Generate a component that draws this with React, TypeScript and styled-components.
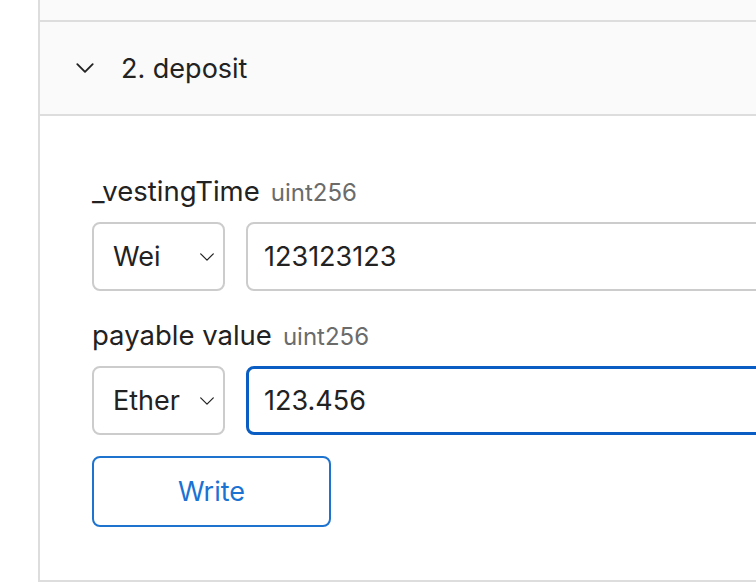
import React from 'react'
import styled, { createGlobalStyle } from 'styled-components'

const GlobalStyle = createGlobalStyle`
  html, body {
    margin: 0;
    padding: 0;
    background: #ffffff;
    overflow: hidden;
  }
  body {
    font-family: Inter, "Noto Sans", "Liberation Sans", sans-serif;
    color: #222222;
  }
`

const Chevron = ({ size = 20, sw = 1.6 }: { size?: number; sw?: number }) => (
  <svg width={size} height={size} viewBox="0 0 20 20" fill="none">
    <path d="M3 6.5 L10 13.5 L17 6.5" stroke="#222" strokeWidth={sw} strokeLinecap="round" strokeLinejoin="round" />
  </svg>
)

const App = () => {
  return (
    <>
      <GlobalStyle />
      <Page>
        <Panel>
          <PrevHeader />
          <Header>
            <ChevronBox>
              <Chevron size={22} sw={1.7} />
            </ChevronBox>
            <Title>2. deposit</Title>
          </Header>
          <Body>
            <Field>
              <Label>
                _vestingTime<Type>uint256</Type>
              </Label>
              <Row>
                <Select>
                  <span>Wei</span>
                  <SelectArrow>
                    <Chevron size={18} sw={1.4} />
                  </SelectArrow>
                </Select>
                <Input defaultValue="123123123" />
              </Row>
            </Field>
            <Field>
              <Label>
                payable value<Type>uint256</Type>
              </Label>
              <Row>
                <Select>
                  <span>Ether</span>
                  <SelectArrow>
                    <Chevron size={18} sw={1.4} />
                  </SelectArrow>
                </Select>
                <Input defaultValue="123.456" focused />
              </Row>
            </Field>
            <WriteButton>Write</WriteButton>
          </Body>
        </Panel>
      </Page>
    </>
  )
}

export default App

const Page = styled.div`
  width: 756px;
  height: 584px;
  overflow: hidden;
  padding-left: 38px;
  box-sizing: border-box;
`
const Panel = styled.div`
  width: 1000px;
  border-left: 2px solid #dddddd;
  display: flex;
  flex-direction: column;
`
const PrevHeader = styled.div`
  height: 20px;
  background: #fafafa;
  border-bottom: 2px solid #dddddd;
`
const Header = styled.div`
  height: 92px;
  background: #fafafa;
  border-bottom: 2px solid #dddddd;
  display: flex;
  align-items: center;
  padding-left: 34px;
`
const ChevronBox = styled.div`
  display: flex;
  align-items: center;
  width: 22px;
  margin-right: 25px;
`
const Title = styled.div`
  font-size: 27px;
  color: #222222;
`
const Body = styled.div`
  padding: 61px 0 53px 52px;
  border-bottom: 2px solid #dddddd;
  display: flex;
  flex-direction: column;
  gap: 30px;
`
const Field = styled.div`
  display: flex;
  flex-direction: column;
  gap: 17px;
`
const Label = styled.div`
  height: 28px;
  line-height: 28px;
  font-size: 27.5px;
  color: #222222;
  white-space: nowrap;
`
const Type = styled.span`
  font-size: 24px;
  color: #6b6b6b;
  margin-left: 11px;
`
const Row = styled.div`
  display: flex;
  gap: 21px;
`
const Select = styled.div`
  position: relative;
  width: 133px;
  height: 69px;
  box-sizing: border-box;
  border: 2px solid #cccccc;
  border-radius: 8px;
  display: flex;
  align-items: center;
  padding-left: 19px;
  font-size: 27px;
  color: #222222;
`
const SelectArrow = styled.div`
  position: absolute;
  right: 7px;
  top: 50%;
  transform: translateY(-50%);
  display: flex;
`
const Input = styled.input<{ focused?: boolean }>`
  width: 700px;
  height: 69px;
  box-sizing: border-box;
  border: ${p => (p.focused ? '3px solid #0a5dc2' : '2px solid #cccccc')};
  border-radius: 8px;
  padding-left: ${p => (p.focused ? '15px' : '16px')};
  font-family: inherit;
  font-size: 27px;
  color: #222222;
  outline: none;
  background: #ffffff;
`
const WriteButton = styled.button`
  width: 239px;
  height: 71px;
  margin-top: -9px;
  box-sizing: border-box;
  border: 2px solid #1e73cf;
  border-radius: 8px;
  background: #ffffff;
  color: #1b72d2;
  font-family: inherit;
  font-size: 27px;
  cursor: pointer;
`
